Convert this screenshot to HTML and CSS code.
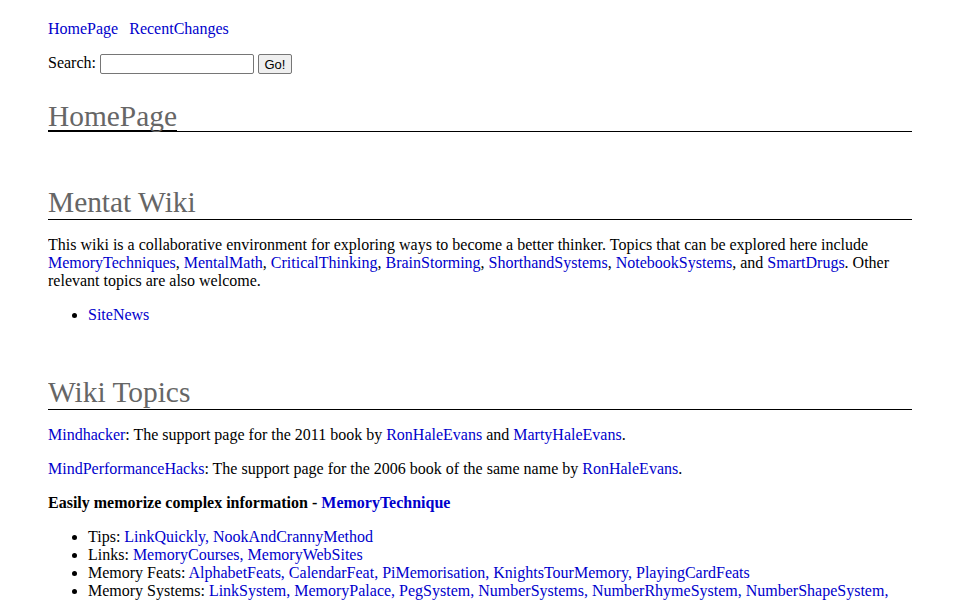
FILE: index.html
```
<!DOCTYPE html>
<html lang="en">
<head>
    <meta charset="UTF-8">
    <title>HomePage - Mentat Wiki</title>
    <link rel="stylesheet" href="styles.css">
</head>
<body>
    <div class="header">
        <div class="gotobar">
            <a href="#">HomePage</a>
            <a href="#">RecentChanges</a>
        </div>
        <form class="search">
            <label for="search">Search:</label>
            <input type="text" id="search" name="search">
            <button type="submit">Go!</button>
        </form>
        <h1><a href="#">HomePage</a></h1>
    </div>

    <div class="content">
        <h2>Mentat Wiki</h2>
        <p>This wiki is a collaborative environment for exploring ways to become a better thinker. Topics that can be explored here include <a href="#">MemoryTechniques</a>, <a href="#">MentalMath</a>, <a href="#">CriticalThinking</a>, <a href="#">BrainStorming</a>, <a href="#">ShorthandSystems</a>, <a href="#">NotebookSystems</a>, and <a href="#">SmartDrugs</a>. Other relevant topics are also welcome.</p>
        <ul>
            <li><a href="#">SiteNews</a></li>
        </ul>

        <h2>Wiki Topics</h2>
        <p><a href="#">Mindhacker</a>: The support page for the 2011 book by <a href="#">RonHaleEvans</a> and <a href="#">MartyHaleEvans</a>.</p>
        <p><a href="#">MindPerformanceHacks</a>: The support page for the 2006 book of the same name by <a href="#">RonHaleEvans</a>.</p>
        <p><b>Easily memorize complex information - <a href="#">MemoryTechnique</a></b></p>
        <ul class="topics">
            <li>Tips: <span class="links"><a href="#">LinkQuickly</a>, <a href="#">NookAndCrannyMethod</a></span></li>
            <li>Links: <span class="links"><a href="#">MemoryCourses</a>, <a href="#">MemoryWebSites</a></span></li>
            <li>Memory Feats: <span class="links"><a href="#">AlphabetFeats</a>, <a href="#">CalendarFeat</a>, <a href="#">PiMemorisation</a>, <a href="#">KnightsTourMemory</a>, <a href="#">PlayingCardFeats</a></span></li>
            <li>Memory Systems: <span class="links"><a href="#">LinkSystem</a>, <a href="#">MemoryPalace</a>, <a href="#">PegSystem</a>, <a href="#">NumberSystems</a>, <a href="#">NumberRhymeSystem</a>, <a href="#">NumberShapeSystem</a>, <a href="#">DominicSystem</a>, <a href="#">MajorSystem</a></span></li>
        </ul>
    </div>
</body>
</html>
```

FILE: styles.css
```
body {
    font-family: "Liberation Serif", "Times New Roman", serif;
    font-size: 16px;
    color: #000;
    background-color: #fff;
    margin: 20px 48px;
}

a {
    color: #0000cc;
    text-decoration: none;
}

.gotobar a {
    margin-right: 7px;
}

.search {
    margin: 16px 0 0;
}

.search input {
    width: 148px;
    height: 16px;
    padding: 1px 2px;
    border: 1px solid #767676;
    border-radius: 2px;
    font-size: 13px;
    vertical-align: middle;
}

.search button {
    font-family: Arial, "Liberation Sans", sans-serif;
    font-size: 13px;
    width: 34px;
    height: 20px;
    padding: 0;
    border: 1px solid #767676;
    border-radius: 2px;
    background-color: #efefef;
    vertical-align: middle;
}

h1, h2 {
    font-weight: normal;
    font-size: 29.4px;
    color: #666;
    border-bottom: 1px solid #000;
    margin: 0;
}

h1 {
    margin: 24px 0 54px;
    padding-top: 4px;
    line-height: 28px;
}

h1 a {
    color: #666;
    display: inline-block;
    border-bottom: 2px solid #000;
    margin-bottom: -1px;
}

h2 {
    margin-top: 52px;
    line-height: 33px;
}

.content p {
    margin: 16px 0;
    line-height: 18px;
}

ul {
    margin: 16px 0;
    padding-left: 40px;
    line-height: 18px;
}

.links {
    color: #0000cc;
}
```
